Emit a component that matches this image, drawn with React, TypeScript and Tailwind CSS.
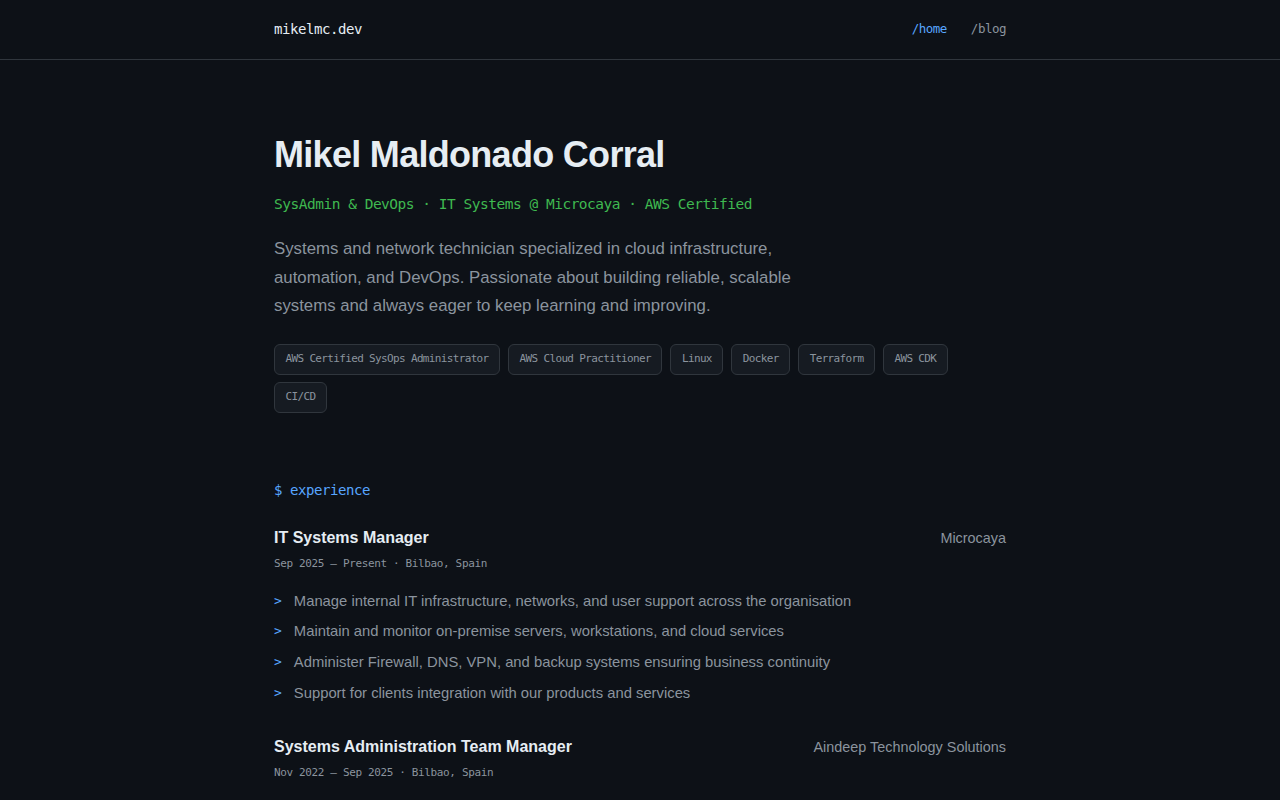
import React from 'react'

const mono = "font-['DejaVu_Sans_Mono',monospace]"

const tags = [
  'AWS Certified SysOps Administrator',
  'AWS Cloud Practitioner',
  'Linux',
  'Docker',
  'Terraform',
  'AWS CDK',
  'CI/CD',
]

const jobs = [
  {
    title: 'IT Systems Manager',
    company: 'Microcaya',
    dates: 'Sep 2025 – Present · Bilbao, Spain',
    points: [
      'Manage internal IT infrastructure, networks, and user support across the organisation',
      'Maintain and monitor on-premise servers, workstations, and cloud services',
      'Administer Firewall, DNS, VPN, and backup systems ensuring business continuity',
      'Support for clients integration with our products and services',
    ],
  },
  {
    title: 'Systems Administration Team Manager',
    company: 'Aindeep Technology Solutions',
    dates: 'Nov 2022 – Sep 2025 · Bilbao, Spain',
    points: [
      'Lead the systems administration team and coordinate infrastructure projects',
      'Design and operate cloud environments on AWS with infrastructure as code',
    ],
  },
]

const App: React.FC = () => {
  return (
    <div className="min-h-screen bg-[#0d1117] font-['Liberation_Sans',Arial,sans-serif] text-[#e6edf3]">
      <header className="border-b border-[#30363d]">
        <div className="mx-auto flex h-[59px] max-w-[732px] items-center justify-between">
          <span className={`${mono} text-[14px] tracking-[-0.43px] text-[#e6edf3]`}>mikelmc.dev</span>
          <nav className={`${mono} flex gap-6 text-[12.5px] tracking-[-0.5px]`}>
            <a className="text-[#58a6ff]">/home</a>
            <a className="text-[#8b949e]">/blog</a>
          </nav>
        </div>
      </header>

      <main className="mx-auto max-w-[732px] pt-[75px] pb-16">
        <h1 className="text-[36px] font-bold leading-10 tracking-[-0.7px] text-[#e6edf3]">Mikel Maldonado Corral</h1>
        <p className={`${mono} mt-[17px] text-[14.5px] leading-6 tracking-[-0.49px] text-[#3fb950]`}>
          SysAdmin &amp; DevOps · IT Systems @ Microcaya · AWS Certified
        </p>
        <p className="mt-[19px] max-w-xl text-[16.8px] leading-[28.5px] text-[#8b949e]">
          Systems and network technician specialized in cloud infrastructure, automation, and DevOps. Passionate about building reliable, scalable systems and always eager to keep learning and improving.
        </p>
        <div className="mt-[23px] flex flex-wrap gap-x-2 gap-y-[7px]">
          {tags.map((t) => (
            <span
              key={t}
              className={`${mono} flex h-[31px] items-center rounded-md border border-[#30363d] bg-[#161b22] px-[10.5px] text-[11px] tracking-[-0.65px] text-[#8b949e]`}
            >
              {t}
            </span>
          ))}
        </div>

        <section className="mt-[65px]">
          <h2 className={`${mono} text-[14px] leading-6 tracking-[-0.43px] text-[#58a6ff]`}>$ experience</h2>
          <div className="mt-6 flex flex-col gap-[30px]">
            {jobs.map((j) => (
              <div key={j.title}>
                <div className="flex items-baseline justify-between">
                  <h3 className="text-base font-bold leading-6 text-[#e6edf3]">{j.title}</h3>
                  <span className="text-[14.4px] text-[#8b949e]">{j.company}</span>
                </div>
                <p className={`${mono} mt-[5px] text-[11px] leading-[18px] tracking-[-0.36px] text-[#8b949e]`}>{j.dates}</p>
                <ul className="mt-4 flex flex-col gap-[6.7px]">
                  {j.points.map((p) => (
                    <li key={p} className="flex gap-[12px] text-[14.8px] leading-6 text-[#8b949e]">
                      <span className={`${mono} text-[13px] text-[#58a6ff]`}>&gt;</span>
                      <span>{p}</span>
                    </li>
                  ))}
                </ul>
              </div>
            ))}
          </div>
        </section>
      </main>
    </div>
  )
}

export default App
